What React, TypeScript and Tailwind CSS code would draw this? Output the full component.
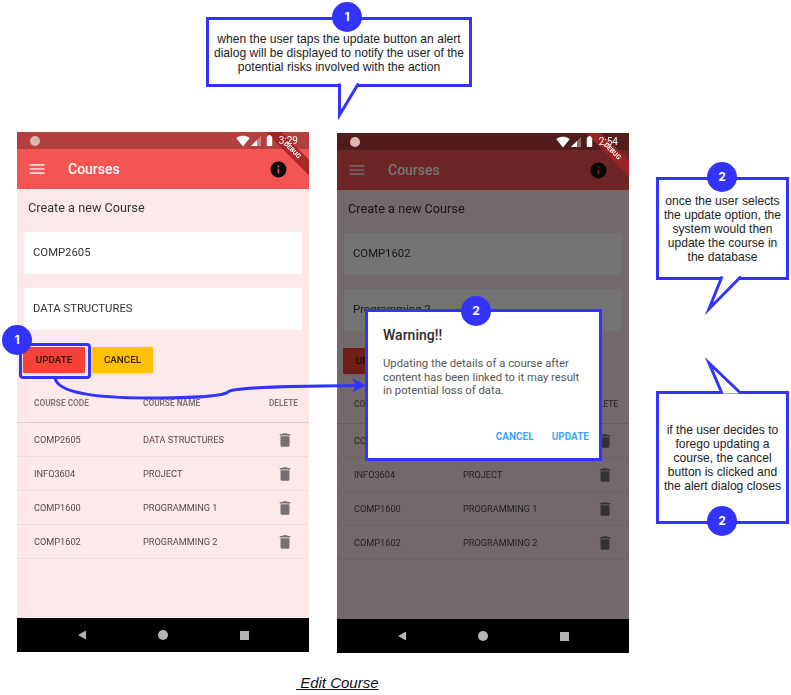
import React from 'react';
import { MdBatteryFull, MdDelete, MdInfo, MdMenu, MdSignalWifi4Bar } from 'react-icons/md';

interface Course {
  code: string;
  name: string;
}

interface PhoneProps {
  time: string;
  code: string;
  name: string;
  dimmed?: boolean;
  className: string;
}

const courses: Course[] = [
  { code: 'COMP2605', name: 'DATA STRUCTURES' },
  { code: 'INFO3604', name: 'PROJECT' },
  { code: 'COMP1600', name: 'PROGRAMMING 1' },
  { code: 'COMP1602', name: 'PROGRAMMING 2' },
];

const Badge: React.FC<{ n: number; className: string }> = ({ n, className }) => (
  <div className={`absolute z-20 flex h-[30px] w-[30px] items-center justify-center rounded-full bg-[#3333ff] font-['Inter',sans-serif] text-xs font-bold text-white ${className}`}>
    {n}
  </div>
);

const Phone: React.FC<PhoneProps> = ({ time, code, name, dimmed, className }) => (
  <div className={`absolute flex h-[520px] w-[292px] flex-col overflow-hidden bg-[#fee9ea] font-['Roboto',sans-serif] blur-[0.3px] ${className}`}>
    <div className="h-[17px] bg-[#b33f3f]" />

    <div className="flex h-10 items-center bg-[#f25552] pl-[10px] pr-[21px]">
      <MdMenu size={20} className="text-white opacity-80" />
      <span className="ml-[21px] text-sm font-medium text-white">Courses</span>
      <MdInfo size={19} className="ml-auto text-[#0a0a0a]" />
    </div>

    <div className="flex flex-1 flex-col">
      <p className="ml-[11px] mt-[11px] text-[12.7px] leading-4 text-[#333333]">Create a new Course</p>
      <div className="mx-[7px] mt-[16px] flex h-[42px] items-center rounded-[2px] bg-white pl-[9px] text-[11.3px] text-[#333333]">{code}</div>
      <div className="mx-[7px] mt-[14px] flex h-[42px] items-center rounded-[2px] bg-white pl-[9px] text-[11.3px] text-[#333333]">{name}</div>

      <div className="ml-[6px] mt-[17px] flex gap-[7px]">
        <button className="flex h-[26px] w-[62px] items-center justify-center rounded-[1px] bg-[#f44336] text-[9.8px] font-medium text-[#2a1210] shadow-sm">UPDATE</button>
        <button className="flex h-[26px] w-[61px] items-center justify-center rounded-[1px] bg-[#ffc107] text-[9.8px] font-medium text-[#2e2406] shadow-sm">CANCEL</button>
      </div>

      <div className="grid h-[50px] grid-cols-[109px_1fr_auto] items-center border-b border-[#dccfd0] pl-[17px] pr-[11px] pt-[11px] text-[8.3px] font-semibold text-[#7a7374]">
        <span>COURSE CODE</span>
        <span>COURSE NAME</span>
        <span>DELETE</span>
      </div>

      {courses.map((course) => (
        <div key={course.code} className="grid h-[34px] grid-cols-[109px_1fr_auto] items-center border-b border-[#f0dcdd] pl-[17px] pr-[15px] pt-px text-[9.2px] text-[#514b4c]">
          <span>{course.code}</span>
          <span>{course.name}</span>
          <MdDelete size={18} className="text-[#757071]" />
        </div>
      ))}
    </div>

    <div className="relative z-20 flex h-[34px] items-center justify-center bg-black">
      <div className="flex w-[81px] justify-center">
        <svg width="10" height="10" viewBox="0 0 10 10">
          <polygon points="9,0.5 9,9.5 1,5" fill="#b4b4b4" />
        </svg>
      </div>
      <div className="flex w-[81px] justify-center">
        <div className="h-[10px] w-[10px] rounded-full bg-[#b4b4b4]" />
      </div>
      <div className="flex w-[81px] justify-center">
        <div className="h-[9px] w-[9px] bg-[#b4b4b4]" />
      </div>
    </div>

    {dimmed && <div className="absolute inset-0 z-10 bg-black/55" />}

    {/* debug ribbon of the flutter build */}
    <div className="absolute left-[245px] top-[13px] z-[15] flex h-[11px] w-[60px] rotate-45 items-center justify-center bg-[#a02426]/90 text-[6.5px] font-bold leading-none text-white">
      DEBUG
    </div>

    {/* status icons stay bright, above the dialog scrim and the ribbon */}
    <div className="absolute inset-x-0 top-0 z-20 flex h-[17px] items-center pl-[13px] pr-[11px]">
      <div className="h-[10px] w-[10px] rounded-full bg-[#e0b4b4]" />
      <div className="ml-auto flex items-center text-white">
        <MdSignalWifi4Bar size={14} />
        <svg width="10" height="10" viewBox="0 0 10 10" className="ml-px">
          <polygon points="10,0 10,10 0,10" fill="#ffffff" opacity="0.35" />
          <polygon points="6,4 6,10 0,10" fill="#ffffff" />
        </svg>
        <MdBatteryFull size={13} className="ml-[2px]" />
        <span className="ml-[3px] text-[10px] leading-none">{time}</span>
      </div>
    </div>
  </div>
);

const calloutBox = "absolute z-10 flex justify-center border-[3px] border-[#3333ff] bg-white text-center font-['Liberation_Sans',sans-serif] text-[12.1px] leading-[14px] text-[#222222]";

const App: React.FC = () => {
  return (
    <div className="relative h-[695px] w-[791px] overflow-hidden bg-white">
      <Phone time="3:29" code="COMP2605" name="DATA STRUCTURES" className="left-[17px] top-[132px]" />
      <Phone time="2:54" code="COMP1602" name="Programming 2" dimmed className="left-[337px] top-[133px]" />

      {/* top callout */}
      <div className={`${calloutBox} left-[206px] top-[17px] h-[70px] w-[266px] pt-[12px]`}>
        <p className="w-[256px]">when the user taps the update button an alert dialog will be displayed to notify the user of the potential risks involved with the action</p>
      </div>
      <svg className="absolute left-[330px] top-[80px] z-10" width="40" height="46" viewBox="0 0 40 46">
        <polyline points="9.5,3.5 9.5,35 28.5,3.5" fill="#ffffff" stroke="#3333ff" strokeWidth="3" strokeMiterlimit="12" />
      </svg>
      <Badge n={1} className="left-[332px] top-[2px]" />

      {/* right callouts */}
      <div className={`${calloutBox} left-[656px] top-[177px] h-[103px] w-[133px] pt-[14px]`}>
        <p className="w-[124px]">once the user selects the update option, the system would then update the course in the database</p>
      </div>
      <svg className="absolute left-[700px] top-[272px] z-10" width="50" height="50" viewBox="0 0 50 50">
        <polyline points="22,4.5 9,37 41,4.5" fill="#ffffff" stroke="#3333ff" strokeWidth="3" strokeMiterlimit="12" />
      </svg>
      <Badge n={2} className="left-[707px] top-[162px]" />

      <div className={`${calloutBox} left-[656px] top-[391px] h-[133px] w-[133px] pt-[29px]`}>
        <p className="w-[124px]">if the user decides to forego updating a course, the cancel button is clicked and the alert dialog closes</p>
      </div>
      <svg className="absolute left-[700px] top-[350px] z-10" width="50" height="48" viewBox="0 0 50 48">
        <polyline points="22,43.5 9,13 41,43.5" fill="#ffffff" stroke="#3333ff" strokeWidth="3" strokeMiterlimit="12" />
      </svg>
      <Badge n={2} className="left-[707px] top-[506px]" />

      {/* alert dialog */}
      <div className="absolute left-[365px] top-[309px] z-10 flex h-[152px] w-[237px] flex-col border-[3px] border-[#3333ff] bg-white pl-[15px] pr-[10px] font-['Roboto',sans-serif]">
        <p className="mt-[14px] text-sm font-medium leading-[18px] text-[#2b2b2b]">Warning!!</p>
        <p className="mt-[13px] text-[11.3px] leading-[13.5px] text-[#555555]">Updating the details of a course after content has been linked to it may result in potential loss of data.</p>
        <div className="mb-[14px] mt-auto flex justify-end gap-[18px] text-[10px] font-bold text-[#42a5f5]">
          <span>CANCEL</span>
          <span>UPDATE</span>
        </div>
      </div>
      <Badge n={2} className="left-[461px] top-[296px]" />

      {/* highlight round the update button, and the arrow to the dialog */}
      <div className="absolute left-[19px] top-[343px] z-10 h-[36px] w-[72px] rounded-[4px] border-[3px] border-[#3333ff]" />
      <Badge n={1} className="left-[2px] top-[325px]" />
      <svg className="absolute left-0 top-0 z-10" width="791" height="695" viewBox="0 0 791 695" fill="none">
        <path d="M55 378 C58 393 95 398 150 398 C190 398 222 397 228 392 C232 387 300 386 356 385.5" stroke="#3333ff" strokeWidth="3" />
        <polygon points="366,385.5 352,378 356,385.5 352,392.5" fill="#3333ff" />
      </svg>

      <p className="absolute left-[296px] top-[674px] font-['Liberation_Sans',sans-serif] text-[15px] italic leading-[18px] text-[#111111] underline">&nbsp;Edit Course</p>
    </div>
  );
};

export default App;
